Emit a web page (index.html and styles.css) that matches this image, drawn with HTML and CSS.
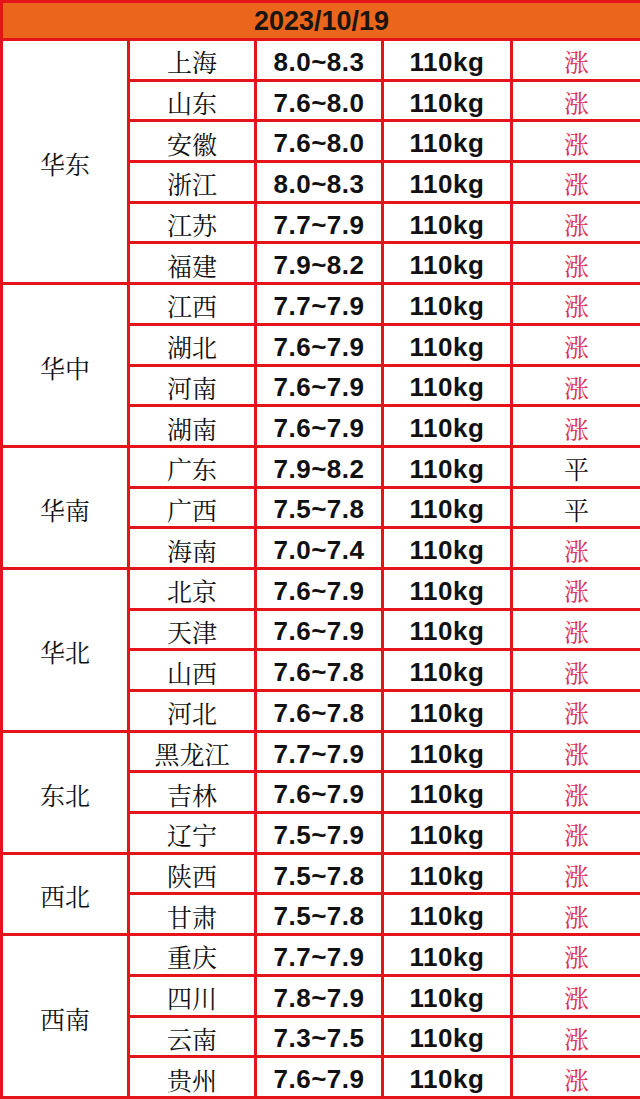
FILE: index.html
```html
<!DOCTYPE html>
<html lang="zh-CN">
<head>
<meta charset="utf-8">
<title>2023/10/19</title>
<link rel="stylesheet" href="styles.css">
</head>
<body>
<table class="price">
<colgroup>
<col class="c1"><col class="c2"><col class="c3"><col class="c4"><col class="c5">
</colgroup>
<thead>
<tr class="head"><th colspan="5">2023/10/19</th></tr>
</thead>
<tbody>
<tr><td class="region" rowspan="6">华东</td><td class="prov">上海</td><td class="num">8.0~8.3</td><td class="num">110kg</td><td class="up">涨</td></tr>
<tr><td class="prov">山东</td><td class="num">7.6~8.0</td><td class="num">110kg</td><td class="up">涨</td></tr>
<tr><td class="prov">安徽</td><td class="num">7.6~8.0</td><td class="num">110kg</td><td class="up">涨</td></tr>
<tr><td class="prov">浙江</td><td class="num">8.0~8.3</td><td class="num">110kg</td><td class="up">涨</td></tr>
<tr><td class="prov">江苏</td><td class="num">7.7~7.9</td><td class="num">110kg</td><td class="up">涨</td></tr>
<tr><td class="prov">福建</td><td class="num">7.9~8.2</td><td class="num">110kg</td><td class="up">涨</td></tr>
<tr><td class="region" rowspan="4">华中</td><td class="prov">江西</td><td class="num">7.7~7.9</td><td class="num">110kg</td><td class="up">涨</td></tr>
<tr><td class="prov">湖北</td><td class="num">7.6~7.9</td><td class="num">110kg</td><td class="up">涨</td></tr>
<tr><td class="prov">河南</td><td class="num">7.6~7.9</td><td class="num">110kg</td><td class="up">涨</td></tr>
<tr><td class="prov">湖南</td><td class="num">7.6~7.9</td><td class="num">110kg</td><td class="up">涨</td></tr>
<tr><td class="region" rowspan="3">华南</td><td class="prov">广东</td><td class="num">7.9~8.2</td><td class="num">110kg</td><td class="flat">平</td></tr>
<tr><td class="prov">广西</td><td class="num">7.5~7.8</td><td class="num">110kg</td><td class="flat">平</td></tr>
<tr><td class="prov">海南</td><td class="num">7.0~7.4</td><td class="num">110kg</td><td class="up">涨</td></tr>
<tr><td class="region" rowspan="4">华北</td><td class="prov">北京</td><td class="num">7.6~7.9</td><td class="num">110kg</td><td class="up">涨</td></tr>
<tr><td class="prov">天津</td><td class="num">7.6~7.9</td><td class="num">110kg</td><td class="up">涨</td></tr>
<tr><td class="prov">山西</td><td class="num">7.6~7.8</td><td class="num">110kg</td><td class="up">涨</td></tr>
<tr><td class="prov">河北</td><td class="num">7.6~7.8</td><td class="num">110kg</td><td class="up">涨</td></tr>
<tr><td class="region" rowspan="3">东北</td><td class="prov">黑龙江</td><td class="num">7.7~7.9</td><td class="num">110kg</td><td class="up">涨</td></tr>
<tr><td class="prov">吉林</td><td class="num">7.6~7.9</td><td class="num">110kg</td><td class="up">涨</td></tr>
<tr><td class="prov">辽宁</td><td class="num">7.5~7.9</td><td class="num">110kg</td><td class="up">涨</td></tr>
<tr><td class="region" rowspan="2">西北</td><td class="prov">陕西</td><td class="num">7.5~7.8</td><td class="num">110kg</td><td class="up">涨</td></tr>
<tr><td class="prov">甘肃</td><td class="num">7.5~7.8</td><td class="num">110kg</td><td class="up">涨</td></tr>
<tr><td class="region" rowspan="4">西南</td><td class="prov">重庆</td><td class="num">7.7~7.9</td><td class="num">110kg</td><td class="up">涨</td></tr>
<tr><td class="prov">四川</td><td class="num">7.8~7.9</td><td class="num">110kg</td><td class="up">涨</td></tr>
<tr><td class="prov">云南</td><td class="num">7.3~7.5</td><td class="num">110kg</td><td class="up">涨</td></tr>
<tr><td class="prov">贵州</td><td class="num">7.6~7.9</td><td class="num">110kg</td><td class="up">涨</td></tr>
</tbody>
</table>
</body>
</html>
```

FILE: styles.css
```css
html, body {
  margin: 0;
  padding: 0;
  background: #ffffff;
}

.price {
  width: 640px;
  height: 1099px;
  border-collapse: collapse;
  table-layout: fixed;
  border: 3px solid #e5141b;
}

.c1 { width: 127px; }
.c2 { width: 127px; }
.c3 { width: 127px; }
.c4 { width: 129px; }
.c5 { width: 130px; }

.price th,
.price td {
  border: 3px solid #e5141b;
  padding: 4px 0 0;
  text-align: center;
  vertical-align: middle;
  line-height: 1;
}

.head th {
  height: 33px;
  padding: 2px 0 0;
  background: #ea661c;
  color: #1c1410;
  font-family: "Liberation Sans", Arial, sans-serif;
  font-weight: bold;
  font-size: 27px;
}

.price tbody tr {
  height: 37.65px;
}

.region,
.prov,
.up,
.flat {
  font-family: "Noto Serif CJK SC", "Noto Sans CJK SC", serif;
  font-size: 25px;
  color: #111111;
}

.num {
  font-family: "Liberation Sans", Arial, sans-serif;
  font-weight: bold;
  font-size: 26px;
  letter-spacing: 0.5px;
  color: #111111;
}

.up {
  color: #d93350;
}
```
